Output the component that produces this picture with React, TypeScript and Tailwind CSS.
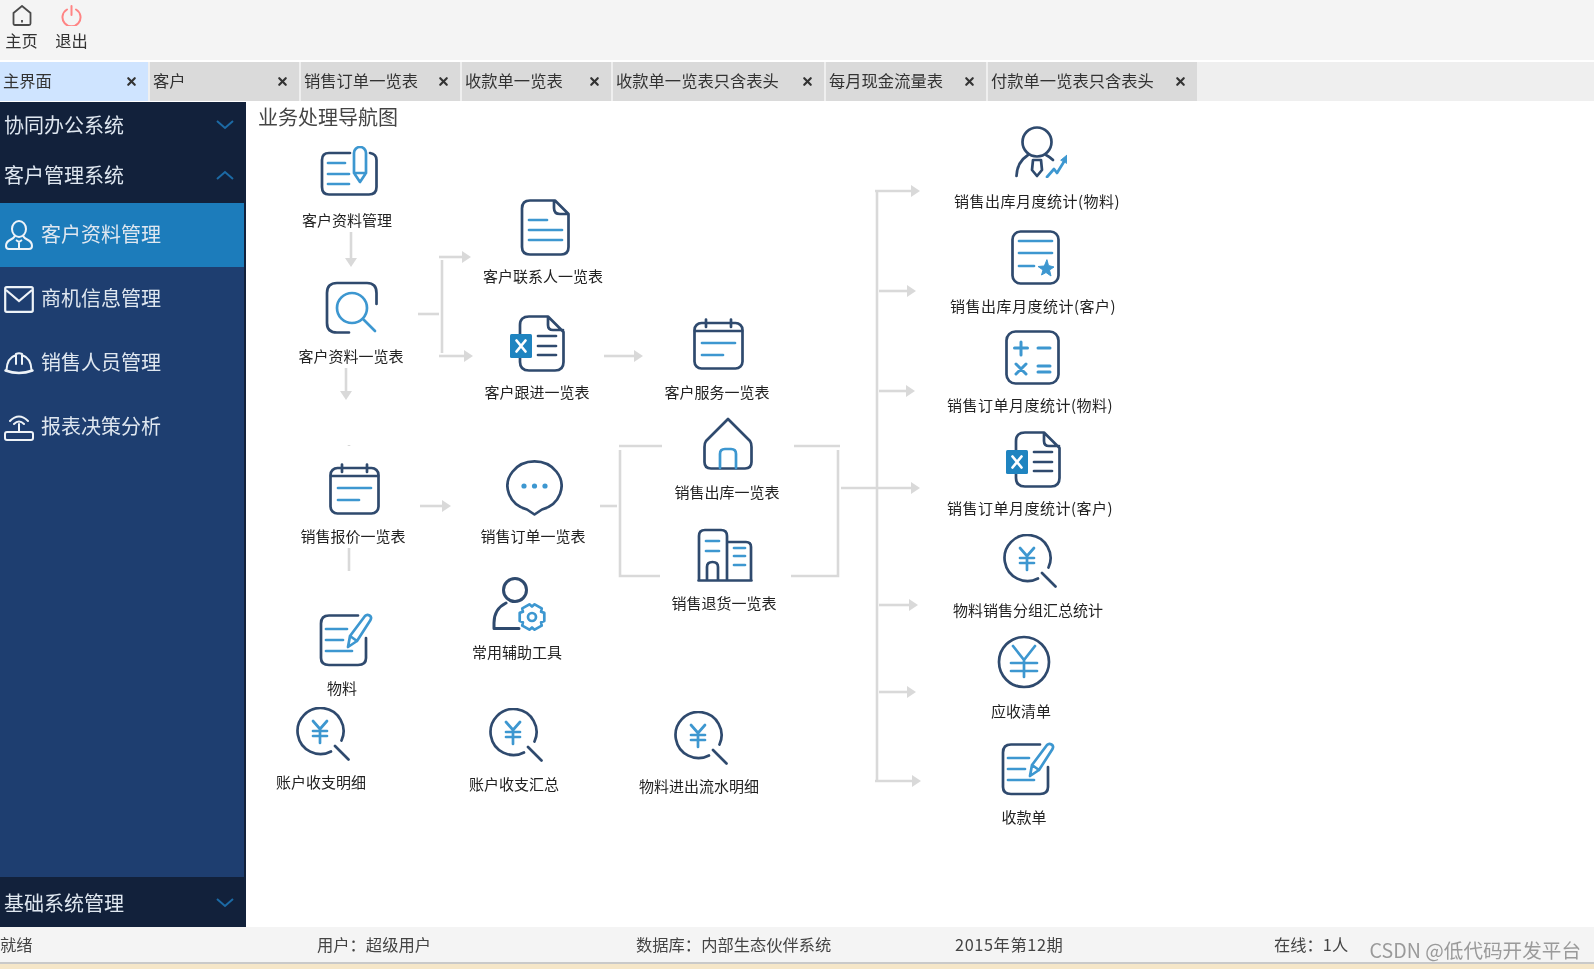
import React from "react";
import { X } from "lucide-react";

const N = "#2f4a6e";
const B = "#3d97d0";
type IconProps = { className: string };

const Svg = ({ w, h, className, children }: { w: number; h: number; className: string; children: React.ReactNode }) => (
  <svg viewBox={`0 0 ${w} ${h}`} fill="none" strokeWidth={2.7} strokeLinecap="round" strokeLinejoin="round" className={className}>
    {children}
  </svg>
);

const CardPen = ({ className }: IconProps) => (
  <Svg w={58} h={50} className={className}>
    <path d="M30 7H9Q2 7 2 14V41Q2 48.500 9 48.500H49Q56.500 48.500 56.500 41V14Q56.500 8 50 7" stroke={N} />
    <path d="M8 17H25M8 28H29M8 38H29" stroke={B} />
    <path d="M34 7a6 6 0 0 1 12 0V27L40 36L34 27ZM34 27H46" stroke={B} />
  </Svg>
);
const Doc = ({ className }: IconProps) => (
  <Svg w={50} h={57} className={className}>
    <path d="M35 1.5H10Q2 1.5 2 9.5V48Q2 55.5 10 55.5H41Q48.500 55.5 48.500 48V15ZM34 2V9Q34 15 40 15H48" stroke={N} />
    <path d="M9 21H27M9 31H42M9 41H42" stroke={B} />
  </Svg>
);
const SquareSearch = ({ className }: IconProps) => (
  <Svg w={53} h={53} className={className}>
    <path d="M51.500 23V12Q51.500 2 42 2H12Q2 2 2 12V42Q2 51.500 12 51.500H24" stroke={N} />
    <circle cx={27} cy={27} r={15} stroke={B} />
    <path d="M38 38L50 50" stroke={B} />
  </Svg>
);
const ExcelDoc = ({ className }: IconProps) => (
  <Svg w={55} h={57} className={className}>
    <path d="M10 19V10Q10 1.5 19 1.5H38L53.500 17V47Q53.500 55.5 45 55.5H19Q10 55.5 10 47V43M38 2V10Q38 15 43 15H53" stroke={N} />
    <rect x={0} y={19} width={22} height={24} rx={1.5} fill="#1f84c0" />
    <path d="M6.500 25.500L15.500 36.500M15.500 25.500L6.500 36.500" stroke="#fff" />
    <path d="M28 21H46M28 31H46M28 40H46" stroke={N} />
  </Svg>
);
const Calendar = ({ className }: IconProps) => (
  <Svg w={51} h={52} className={className}>
    <rect x={1.5} y={5} width={48} height={45.500} rx={7} stroke={N} />
    <path d="M2 13H49M13 1.500V9M38 1.500V9" stroke={N} />
    <path d="M9 25H42M9 37H30" stroke={B} />
  </Svg>
);
const Bubble = ({ className }: IconProps) => (
  <Svg w={57} h={56} className={className}>
    <path d="M21 49.500A27 24.500 0 1 1 36 49.500L28.500 54.500Z" stroke={N} />
    <circle cx={18} cy={26} r={2.6} fill={B} />
    <circle cx={28.5} cy={26} r={2.6} fill={B} />
    <circle cx={39} cy={26} r={2.6} fill={B} />
  </Svg>
);
const House = ({ className }: IconProps) => (
  <Svg w={50} h={53} className={className}>
    <path d="M25 2L47 24Q48.500 26 48.500 30V45Q48.500 51.500 42 51.500H8Q1.500 51.500 1.500 45V30Q1.500 26 3 24Z" stroke={N} />
    <path d="M17 51V37Q17 32 22 32H28Q33 32 33 37V51" stroke={B} />
  </Svg>
);
const Building = ({ className }: IconProps) => (
  <Svg w={56} h={54} className={className}>
    <path d="M2 52V8Q2 2 8 2H24Q30 2 30 8V52M30 14H49Q54 14 54 19V52M1.500 52.500H54.500M10 52V39Q10 34 15.5 34Q21 34 21 39V52" stroke={N} />
    <path d="M9 13H22M9 23H22M37 20H48M37 28H48M37 37H48" stroke={B} />
  </Svg>
);
const gear = (cx: number, cy: number) => {
  const pts: string[] = [];
  for (let i = 0; i < 6; i++) {
    const a = (i * Math.PI) / 3;
    [-0.32, 0.32].forEach((d) => pts.push(`${(cx + 13 * Math.cos(a + d)).toFixed(1)} ${(cy + 13 * Math.sin(a + d)).toFixed(1)}`));
    const m = a + Math.PI / 6;
    pts.push(`${(cx + 10.5 * Math.cos(m)).toFixed(1)} ${(cy + 10.5 * Math.sin(m)).toFixed(1)}`);
  }
  return `M${pts.join("L")}Z`;
};
const UserGear = ({ className }: IconProps) => (
  <Svg w={54} h={54} className={className}>
    <circle cx={23} cy={13} r={11.5} stroke={N} strokeWidth={3} />
    <path d="M14 26Q2 32 2 46V51.5H27" stroke={N} strokeWidth={3} />
    <path d={gear(40, 40)} stroke={B} />
    <circle cx={40} cy={40} r={4} stroke={B} />
  </Svg>
);
const EditDoc = ({ className }: IconProps) => (
  <Svg w={54} h={54} className={className}>
    <path d="M39 2.5H10Q2 2.5 2 10.500V45Q2 52 10 52H39Q47 52 47 45V25" stroke={N} />
    <path d="M7 16H28M7 27H24M7 38H33" stroke={B} />
    <path d="M29 34L31 23L46 3Q48 1 50.500 2.500Q53 4 51.500 7L38 28ZM31 23L38 28" stroke={B} />
  </Svg>
);
const YenSearch = ({ className }: IconProps) => (
  <Svg w={54} h={54} className={className}>
    <path d="M35 44.500A23 23 0 1 1 45.500 33.500M39 39L52.500 52.500" stroke={N} />
    <path d="M17 14L24 22L31 14M17 24H31M17 29H31M24 22V36" stroke={B} />
  </Svg>
);
const YenCircle = ({ className }: IconProps) => (
  <Svg w={54} h={54} className={className}>
    <circle cx={27} cy={27} r={25} stroke={N} />
    <path d="M16 11L27 25L38 11M14 28H40M14 36H40M27 25V42" stroke={B} />
  </Svg>
);
const DocStar = ({ className }: IconProps) => (
  <Svg w={49} h={55} className={className}>
    <rect x={1.5} y={1.500} width={46} height={52} rx={8} stroke={N} />
    <path d="M8 11H41M8 23H41M8 36H23" stroke={B} />
    <path d="M36 30L37.500 35.500L43 37L38.500 40L40 46L35 42.500L30.500 45L32 40L27 36.500L33 36Z" fill={B} stroke={B} strokeWidth={1} />
  </Svg>
);
const Calc = ({ className }: IconProps) => (
  <Svg w={55} h={55} className={className}>
    <rect x={1.5} y={1.5} width={52} height={52} rx={9} stroke={N} />
    <path d="M16 12V25M9.500 18H22.500M33 18H45M11 34L21 44M21 34L11 44M33 36H45M33 42H45" stroke={B} strokeWidth={3} />
  </Svg>
);
const PersonChart = ({ className }: IconProps) => (
  <Svg w={52} h={52} className={className}>
    <circle cx={22} cy={16} r={14.500} stroke={N} />
    <path d="M1.500 50Q2 36 13 29M31 29Q35 31 38 34M18 34H26L27 44L22 50L17 44Z" stroke={N} />
    <path d="M32 51L39 43L42 47L50 34" stroke={B} />
    <path d="M46 34L52 29V37Z" fill={B} stroke={B} strokeWidth={1} />
  </Svg>
);

const Chevron = ({ up }: { up?: boolean }) => (
  <svg viewBox="0 0 18 10" fill="none" stroke="#1c6aa5" strokeWidth={2} className="h-[10px] w-[18px]">
    <path d={up ? "M1 9L9 2L17 9" : "M1 1L9 8L17 1"} />
  </svg>
);

const SideUser = () => (
  <svg viewBox="0 0 28 30" fill="none" stroke="#eef3f8" strokeWidth={2} className="h-[30px] w-[28px]">
    <ellipse cx={14} cy={9} rx={7} ry={8} />
    <path d="M10 16Q9 18 5 20Q1 22 1 26Q1 29 4 29H24Q27 29 27 26Q27 22 23 20Q19 18 18 16M14 21V29M11 20L14 22L17 20" />
  </svg>
);
const SideMail = () => (
  <svg viewBox="0 0 30 27" fill="none" stroke="#eef3f8" strokeWidth={2.2} className="h-[27px] w-[30px]">
    <rect x={1.2} y={1.2} width={27.6} height={24.600} rx={1.500} />
    <path d="M2 4L15 15L28 4" />
  </svg>
);
const SideHelmet = () => (
  <svg viewBox="0 0 30 24" fill="none" stroke="#eef3f8" strokeWidth={2} strokeLinecap="round" className="h-[24px] w-[30px]">
    <path d="M2.500 19Q3 7 12 4V13M18 4V13M18 4Q27 7 27.500 19M12 3Q15 1.500 18 3" />
    <path d="M1.500 19.500Q15 24.500 28.500 19.500" strokeWidth={2.4} />
  </svg>
);
const SideRouter = () => (
  <svg viewBox="0 0 30 27" fill="none" stroke="#eef3f8" strokeWidth={2} strokeLinecap="round" className="h-[27px] w-[30px]">
    <rect x={1} y={18} width={28} height={8} rx={2} />
    <path d="M15 18V10M10 10Q15 5 20 10M6 7Q15 -2 24 7" />
  </svg>
);

const tabs = [
  { t: "主界面", c: "w-[148px] bg-[#cfe4ff]" },
  { t: "客户", c: "w-[149px] bg-[#dadada]" },
  { t: "销售订单一览表", c: "w-[159px] bg-[#dadada]" },
  { t: "收款单一览表", c: "w-[149px] bg-[#dadada]" },
  { t: "收款单一览表只含表头", c: "w-[211px] bg-[#dadada]" },
  { t: "每月现金流量表", c: "w-[160px] bg-[#dadada]" },
  { t: "付款单一览表只含表头", c: "w-[209px] bg-[#dadada]" },
];

const labels = [
  { t: "客户资料管理", c: "left-[101px] top-[108px]" },
  { t: "客户联系人一览表", c: "left-[297px] top-[164px]" },
  { t: "客户资料一览表", c: "left-[105px] top-[244px]" },
  { t: "客户跟进一览表", c: "left-[291px] top-[280px]" },
  { t: "客户服务一览表", c: "left-[471px] top-[280px]" },
  { t: "销售报价一览表", c: "left-[107px] top-[424px]" },
  { t: "销售订单一览表", c: "left-[287px] top-[424px]" },
  { t: "销售出库一览表", c: "left-[481px] top-[380px]" },
  { t: "销售退货一览表", c: "left-[478px] top-[491px]" },
  { t: "常用辅助工具", c: "left-[271px] top-[540px]" },
  { t: "物料", c: "left-[96px] top-[576px]" },
  { t: "账户收支明细", c: "left-[75px] top-[670px]" },
  { t: "账户收支汇总", c: "left-[268px] top-[672px]" },
  { t: "物料进出流水明细", c: "left-[453px] top-[674px]" },
  { t: "销售出库月度统计(物料)", c: "left-[791px] top-[89px] tracking-[0.5px]" },
  { t: "销售出库月度统计(客户)", c: "left-[787px] top-[194px] tracking-[0.5px]" },
  { t: "销售订单月度统计(物料)", c: "left-[784px] top-[293px] tracking-[0.5px]" },
  { t: "销售订单月度统计(客户)", c: "left-[784px] top-[396px] tracking-[0.5px]" },
  { t: "物料销售分组汇总统计", c: "left-[782px] top-[498px]" },
  { t: "应收清单", c: "left-[775px] top-[599px]" },
  { t: "收款单", c: "left-[778px] top-[705px]" },
];

const hArrows = [
  [439, 471, 257], [439, 473, 356], [604, 643, 356], [420, 451, 506], [841, 920, 488],
  [875, 920, 191], [879, 916, 291], [879, 915, 391], [879, 918, 605], [879, 916, 692], [875, 921, 781],
];
const vArrows = [
  [351, 232, 267], [346, 368, 400],
];
const lines = [
  "M418 314H439", "M442 260V353", "M600 506H617", "M619 446H662", "M620 450V576H660",
  "M794 446H840", "M838 450V576H791", "M349 548V571", "M877 190V781", "M349 445V446",
];

const Connectors = () => (
  <svg viewBox="246 102 1348 825" fill="none" stroke="#d9d9d9" strokeWidth={2.6} className="absolute left-0 top-0 h-[825px] w-[1348px]">
    {lines.map((d) => <path key={d} d={d} />)}
    {hArrows.map(([a, b, y]) => (
      <g key={`${a}-${y}`}>
        <path d={`M${a} ${y}H${b - 8}`} />
        <path d={`M${b - 9} ${y - 6}L${b} ${y}L${b - 9} ${y + 6}Z`} fill="#d9d9d9" stroke="none" />
      </g>
    ))}
    {vArrows.map(([x, a, b]) => (
      <g key={x}>
        <path d={`M${x} ${a}V${b - 8}`} />
        <path d={`M${x - 6} ${b - 9}L${x} ${b}L${x + 6} ${b - 9}Z`} fill="#d9d9d9" stroke="none" />
      </g>
    ))}
  </svg>
);

const SideHead = ({ t, up, h }: { t: string; up?: boolean; h: string }) => (
  <div className={`flex items-center justify-between pl-[4px] pr-[10px] text-[20px] text-[#dfe7f0] ${h}`}>
    <span>{t}</span>
    <Chevron up={up} />
  </div>
);

const SideItem = ({ t, icon, active }: { t: string; icon: React.ReactNode; active?: boolean }) => (
  <div className={`flex h-[64px] items-center text-[20px] text-[#dfe7f0] ${active ? "bg-[#1c7cbb]" : ""}`}>
    <span className="flex w-[41px] justify-center pr-[4px]">{icon}</span>
    <span className="-translate-y-px">{t}</span>
  </div>
);

export default function App() {
  return (
    <div className="relative flex h-[969px] w-[1594px] flex-col overflow-hidden bg-white font-['Noto_Sans_CJK_SC','Noto_Sans',sans-serif] text-[#333] blur-[0.5px]">
      <div className="flex h-[60px] gap-[7px] bg-[#f4f4f4] pt-[5px] text-[16.3px] leading-[22px]">
        <div className="flex w-[43px] flex-col items-center gap-[3px]">
          <svg viewBox="0 0 20 21" fill="none" stroke="#4a4a4a" strokeWidth={1.8} className="h-[21px] w-[20px]">
            <path d="M10 1L18.500 8V18.500Q18.500 20 17 20H3Q1.500 20 1.500 18.500V8ZM10 15V17.500" />
          </svg>
          <span>主页</span>
        </div>
        <div className="flex w-[43px] flex-col items-center gap-[3px]">
          <svg viewBox="0 0 21 21" fill="none" stroke="#ff8484" strokeWidth={2} strokeLinecap="round" className="h-[21px] w-[21px]">
            <path d="M6 4.500A9 9 0 1 0 15 4.500M10.500 1V10" />
          </svg>
          <span>退出</span>
        </div>
      </div>
      <div className="mt-[2px] flex h-[39px] gap-[2px] bg-[#efefef] text-[16.3px]">
        {tabs.map((tab) => (
          <div key={tab.t} className={`flex items-center justify-between pl-[3px] pr-[10px] ${tab.c}`}>
            <span className="-translate-y-px">{tab.t}</span>
            <X size={13} strokeWidth={4} className="text-[#333]" />
          </div>
        ))}
      </div>
      <div className="mt-[1px] flex h-[825px]">
        <aside className="flex w-[246px] flex-col border-r-2 border-[#12213b] bg-[#1e3e70]">
          <div className="bg-[#12213b]">
            <SideHead t="协同办公系统" h="h-[50px] pb-[4px]" />
            <SideHead t="客户管理系统" up h="h-[51px] pb-[5px]" />
          </div>
          <div className="flex-1">
            <SideItem t="客户资料管理" active icon={<SideUser />} />
            <SideItem t="商机信息管理" icon={<SideMail />} />
            <SideItem t="销售人员管理" icon={<SideHelmet />} />
            <SideItem t="报表决策分析" icon={<SideRouter />} />
          </div>
          <div className="bg-[#12213b]">
            <SideHead t="基础系统管理" h="h-[50px] pt-[2px]" />
          </div>
        </aside>
        <main className="relative flex-1 overflow-hidden bg-white">
          <div className="pl-[12px] pt-[1px] text-[20px] leading-[28px] text-[#444]">业务处理导航图</div>
          <Connectors />
          <CardPen className="absolute left-[74px] top-[44px] h-[50px] w-[58px]" />
          <Doc className="absolute left-[274px] top-[97px] h-[57px] w-[50px]" />
          <SquareSearch className="absolute left-[79px] top-[179px] h-[53px] w-[53px]" />
          <ExcelDoc className="absolute left-[264px] top-[213px] h-[57px] w-[55px]" />
          <Calendar className="absolute left-[447px] top-[216px] h-[52px] w-[51px]" />
          <Calendar className="absolute left-[83px] top-[361px] h-[52px] w-[51px]" />
          <Bubble className="absolute left-[260px] top-[358px] h-[56px] w-[57px]" />
          <House className="absolute left-[457px] top-[315px] h-[53px] w-[50px]" />
          <Building className="absolute left-[451px] top-[426px] h-[54px] w-[56px]" />
          <UserGear className="absolute left-[246px] top-[475px] h-[54px] w-[54px]" />
          <EditDoc className="absolute left-[73px] top-[511px] h-[54px] w-[54px]" />
          <YenSearch className="absolute left-[50px] top-[605px] h-[54px] w-[54px]" />
          <YenSearch className="absolute left-[243px] top-[606px] h-[54px] w-[54px]" />
          <YenSearch className="absolute left-[428px] top-[609px] h-[54px] w-[54px]" />
          <PersonChart className="absolute left-[769px] top-[24px] h-[52px] w-[52px]" />
          <DocStar className="absolute left-[765px] top-[128px] h-[55px] w-[49px]" />
          <Calc className="absolute left-[759px] top-[228px] h-[55px] w-[55px]" />
          <ExcelDoc className="absolute left-[760px] top-[329px] h-[57px] w-[55px]" />
          <YenSearch className="absolute left-[757px] top-[432px] h-[54px] w-[54px]" />
          <YenCircle className="absolute left-[751px] top-[533px] h-[54px] w-[54px]" />
          <EditDoc className="absolute left-[755px] top-[640px] h-[54px] w-[54px]" />
          {labels.map((l) => (
            <span key={l.t} className={`absolute h-5 -translate-x-1/2 whitespace-nowrap text-[15px] leading-5 text-[#222] ${l.c}`}>
              {l.t}
            </span>
          ))}
        </main>
      </div>
      <div className="flex h-[35px] items-center bg-[#f4f4f4] pb-[1px] text-[16.3px] text-[#444]">
        <span className="w-[317px]">就绪</span>
        <span className="w-[319px]">用户：超级用户</span>
        <span className="w-[319px]">数据库：内部生态伙伴系统</span>
        <span className="w-[319px] tracking-[0.6px]">2015年第12期</span>
        <span>在线：1人</span>
      </div>
      <div className="h-[2px] bg-[#c9c9c9]" />
      <div className="h-[5px] bg-[#f5e6c8]" />
      <span className="absolute bottom-[7px] right-[13px] text-[19.6px] leading-6 text-[#9a9a9a]">CSDN @低代码开发平台</span>
    </div>
  );
}
